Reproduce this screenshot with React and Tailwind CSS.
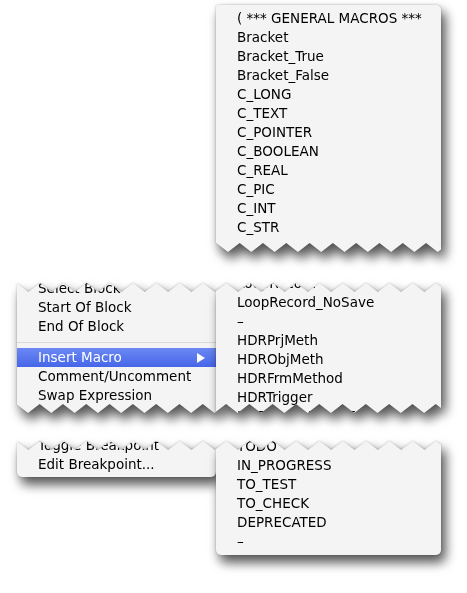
import React from 'react';
import clsx from 'clsx';

// torn edge geometry (page px)
const P = 23.3;
const D = 9;

const tri = (x, off) => {
  const f = ((((x - off) % P) + P) % P) / P;
  return D * (1 - Math.abs(2 * f - 1));
};

const edgeXs = (left, w, off) => {
  const xs = [0];
  const half = P / 2;
  let n = Math.ceil((left - off) / half);
  while (off + n * half < left + w) {
    const x = off + n * half - left;
    if (x > 0) xs.push(+x.toFixed(2));
    n++;
  }
  xs.push(w);
  return xs;
};

const tornClip = (left, w, { top, bottom }) => {
  const pts = [];
  if (top != null) {
    edgeXs(left, w, top).forEach((x) => pts.push(`${x}px ${tri(left + x, top).toFixed(2)}px`));
  } else {
    pts.push('0px -40px', `${w}px -40px`);
  }
  if (bottom != null) {
    edgeXs(left, w, bottom)
      .reverse()
      .forEach((x) => pts.push(`${x}px calc(100% - ${tri(left + x, bottom).toFixed(2)}px)`));
  } else {
    pts.push(`${w}px calc(100% + 40px)`, '0px calc(100% + 40px)');
  }
  return `polygon(${pts.join(', ')})`;
};

const Row = ({ children }) => (
  <div className="h-[19px] leading-[19px] pl-[21px] whitespace-nowrap">{children}</div>
);

const Separator = () => (
  <div className="h-[12px] flex items-center">
    <div className="h-px w-full bg-[#d9d9d9]" />
  </div>
);

const Highlight = ({ children }) => (
  <div className="h-[19px] leading-[19px] pl-[21px] pr-[11px] flex items-center justify-between text-white bg-gradient-to-b from-[#6c88f3] to-[#4666e9] whitespace-nowrap">
    <span>{children}</span>
    <svg width="8" height="10" viewBox="0 0 8 10">
      <path d="M0 0 L8 5 L0 10 Z" fill="#fff" />
    </svg>
  </div>
);

const Panel = ({ left, width, edges, className, children }) => (
  <div className="[filter:drop-shadow(4px_7px_6px_rgba(0,0,0,0.62))_drop-shadow(0_0_1px_rgba(0,0,0,0.25))]">
    <div
      className={clsx('bg-[#f4f4f4] overflow-hidden', className)}
      style={{ clipPath: tornClip(left, width, edges) }}
    >
      {children}
    </div>
  </div>
);

const macros = [
  '( *** GENERAL MACROS ***',
  'Bracket',
  'Bracket_True',
  'Bracket_False',
  'C_LONG',
  'C_TEXT',
  'C_POINTER',
  'C_BOOLEAN',
  'C_REAL',
  'C_PIC',
  'C_INT',
  'C_STR',
];

const midMacros = [
  'LoopRecord',
  'LoopRecord_NoSave',
  '–',
  'HDRPrjMeth',
  'HDRObjMeth',
  'HDRFrmMethod',
  'HDRTrigger',
  'HDRGetSetFormEvent',
];

const lowMacros = ['TODO', 'IN_PROGRESS', 'TO_TEST', 'TO_CHECK', 'DEPRECATED', '–'];

export default function App() {
  return (
    <div className="w-[467px] h-[593px] bg-white pl-[17px] pt-[5px] text-black text-[13.5px] font-['DejaVu_Sans',sans-serif] overflow-hidden">
      {/* top piece of the submenu */}
      <div className="flex pl-[199px]">
        <Panel left={216} width={225} edges={{ bottom: 228 }} className="w-[225px] h-[247px] rounded-tr-[5px] rounded-tl-[2px] pt-[4px]">
          {macros.map((m) => (
            <Row key={m}>{m}</Row>
          ))}
        </Panel>
      </div>

      {/* middle strip */}
      <div className="flex mt-[31px]">
        <Panel left={17} width={199} edges={{ top: 40, bottom: 28 }} className="w-[199px] h-[130px]">
          <div className="-mt-[4px]">
            <Row>Select Block</Row>
            <Row>Start Of Block</Row>
            <Row>End Of Block</Row>
            <Separator />
            <Highlight>Insert Macro</Highlight>
            <Row>Comment/Uncomment</Row>
            <Row>Swap Expression</Row>
          </div>
        </Panel>
        <Panel left={216} width={225} edges={{ top: 40, bottom: 28 }} className="w-[225px] h-[130px]">
          <div className="-mt-[9px]">
            {midMacros.map((m, i) => (
              <Row key={i}>{m}</Row>
            ))}
          </div>
        </Panel>
      </div>

      {/* bottom strip */}
      <div className="flex items-start mt-[28px]">
        <Panel left={17} width={199} edges={{ top: 40 }} className="w-[199px] h-[36px] rounded-b-[5px]">
          <div className="-mt-[5px]">
            <Row>Toggle Breakpoint</Row>
            <Row>Edit Breakpoint...</Row>
          </div>
        </Panel>
        <Panel left={216} width={225} edges={{ top: 40 }} className="w-[225px] h-[114px] rounded-b-[5px]">
          <div className="-mt-[4px]">
            {lowMacros.map((m, i) => (
              <Row key={i}>{m}</Row>
            ))}
          </div>
        </Panel>
      </div>
    </div>
  );
}
